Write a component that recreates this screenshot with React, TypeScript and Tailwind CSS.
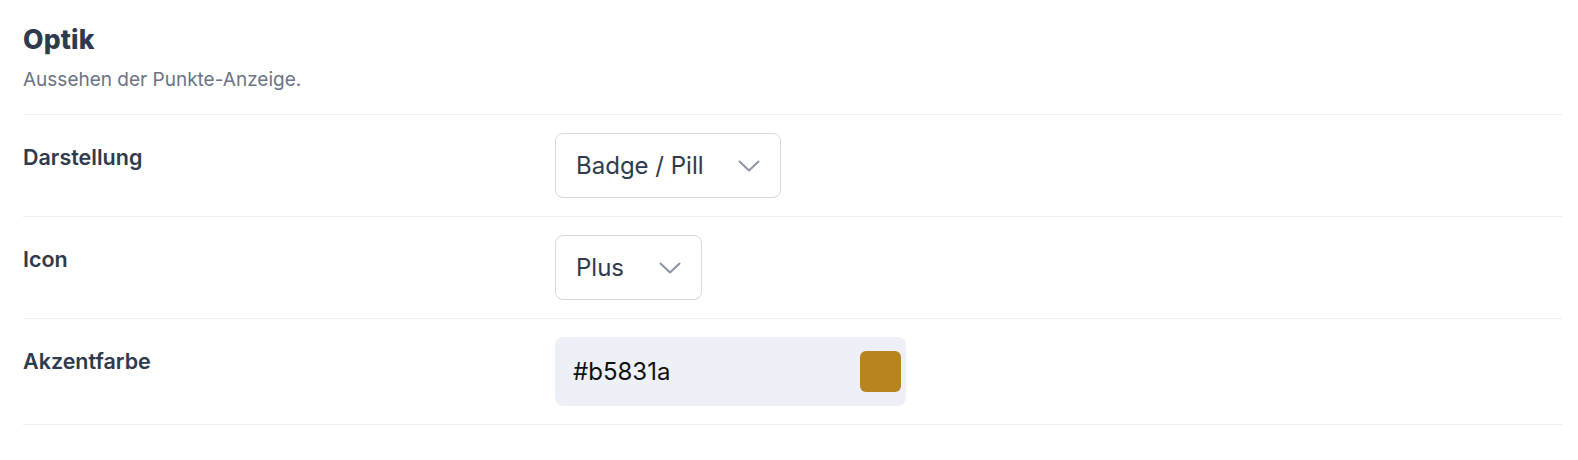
import React from 'react';

function Chevron() {
  return (
    <svg width="22" height="12" viewBox="0 0 22 12" fill="none" className="shrink-0">
      <path d="M1.5 1.5 11 10.5l9.5-9" stroke="#8b94a5" strokeWidth="2" strokeLinecap="round" strokeLinejoin="round" />
    </svg>
  );
}

function Row({ label, children }: { label: string; children: React.ReactNode }) {
  return (
    <div className="flex items-start border-t border-[#edeef1] py-[18px]">
      <div className="w-[532px] shrink-0 pt-[10px] text-[21.5px] leading-[28px] font-semibold text-[#2f3a4d]">{label}</div>
      <div>{children}</div>
    </div>
  );
}

export default function App() {
  return (
    <div className="min-h-[460px] bg-white pl-[23px] pr-[16px] pt-[21px]" style={{ fontFamily: 'Inter, "Noto Sans", sans-serif' }}>
      <h2 className="text-[26.5px] leading-[36px] font-extrabold text-[#2f3a4f] tracking-[0.2px]">Optik</h2>
      <p className="mt-[10px] text-[19px] leading-[26px] text-[#6b7385]">Aussehen der Punkte-Anzeige.</p>
      <div className="mt-[21px]">
        <Row label="Darstellung">
          <div className="flex h-[65px] w-[226px] items-center justify-between rounded-[8px] border border-[#d5d8de] bg-white pl-[20px] pr-[20px]">
            <span className="text-[24px] text-[#2f3a4d]">Badge / Pill</span>
            <Chevron />
          </div>
        </Row>
        <Row label="Icon">
          <div className="flex h-[65px] w-[147px] items-center justify-between rounded-[8px] border border-[#d5d8de] bg-white pl-[20px] pr-[20px]">
            <span className="text-[24px] text-[#2f3a4d]">Plus</span>
            <Chevron />
          </div>
        </Row>
        <Row label="Akzentfarbe">
          <div className="flex h-[69px] w-[351px] items-center justify-between rounded-[8px] bg-[#edf0f6] pl-[18px] pr-[5px]">
            <span className="text-[24px] text-[#111]">#b5831a</span>
            <div className="h-[41px] w-[41px] rounded-[6px] bg-[#b8841f]" />
          </div>
        </Row>
        <div className="border-t border-[#edeef1]" />
      </div>
    </div>
  );
}
